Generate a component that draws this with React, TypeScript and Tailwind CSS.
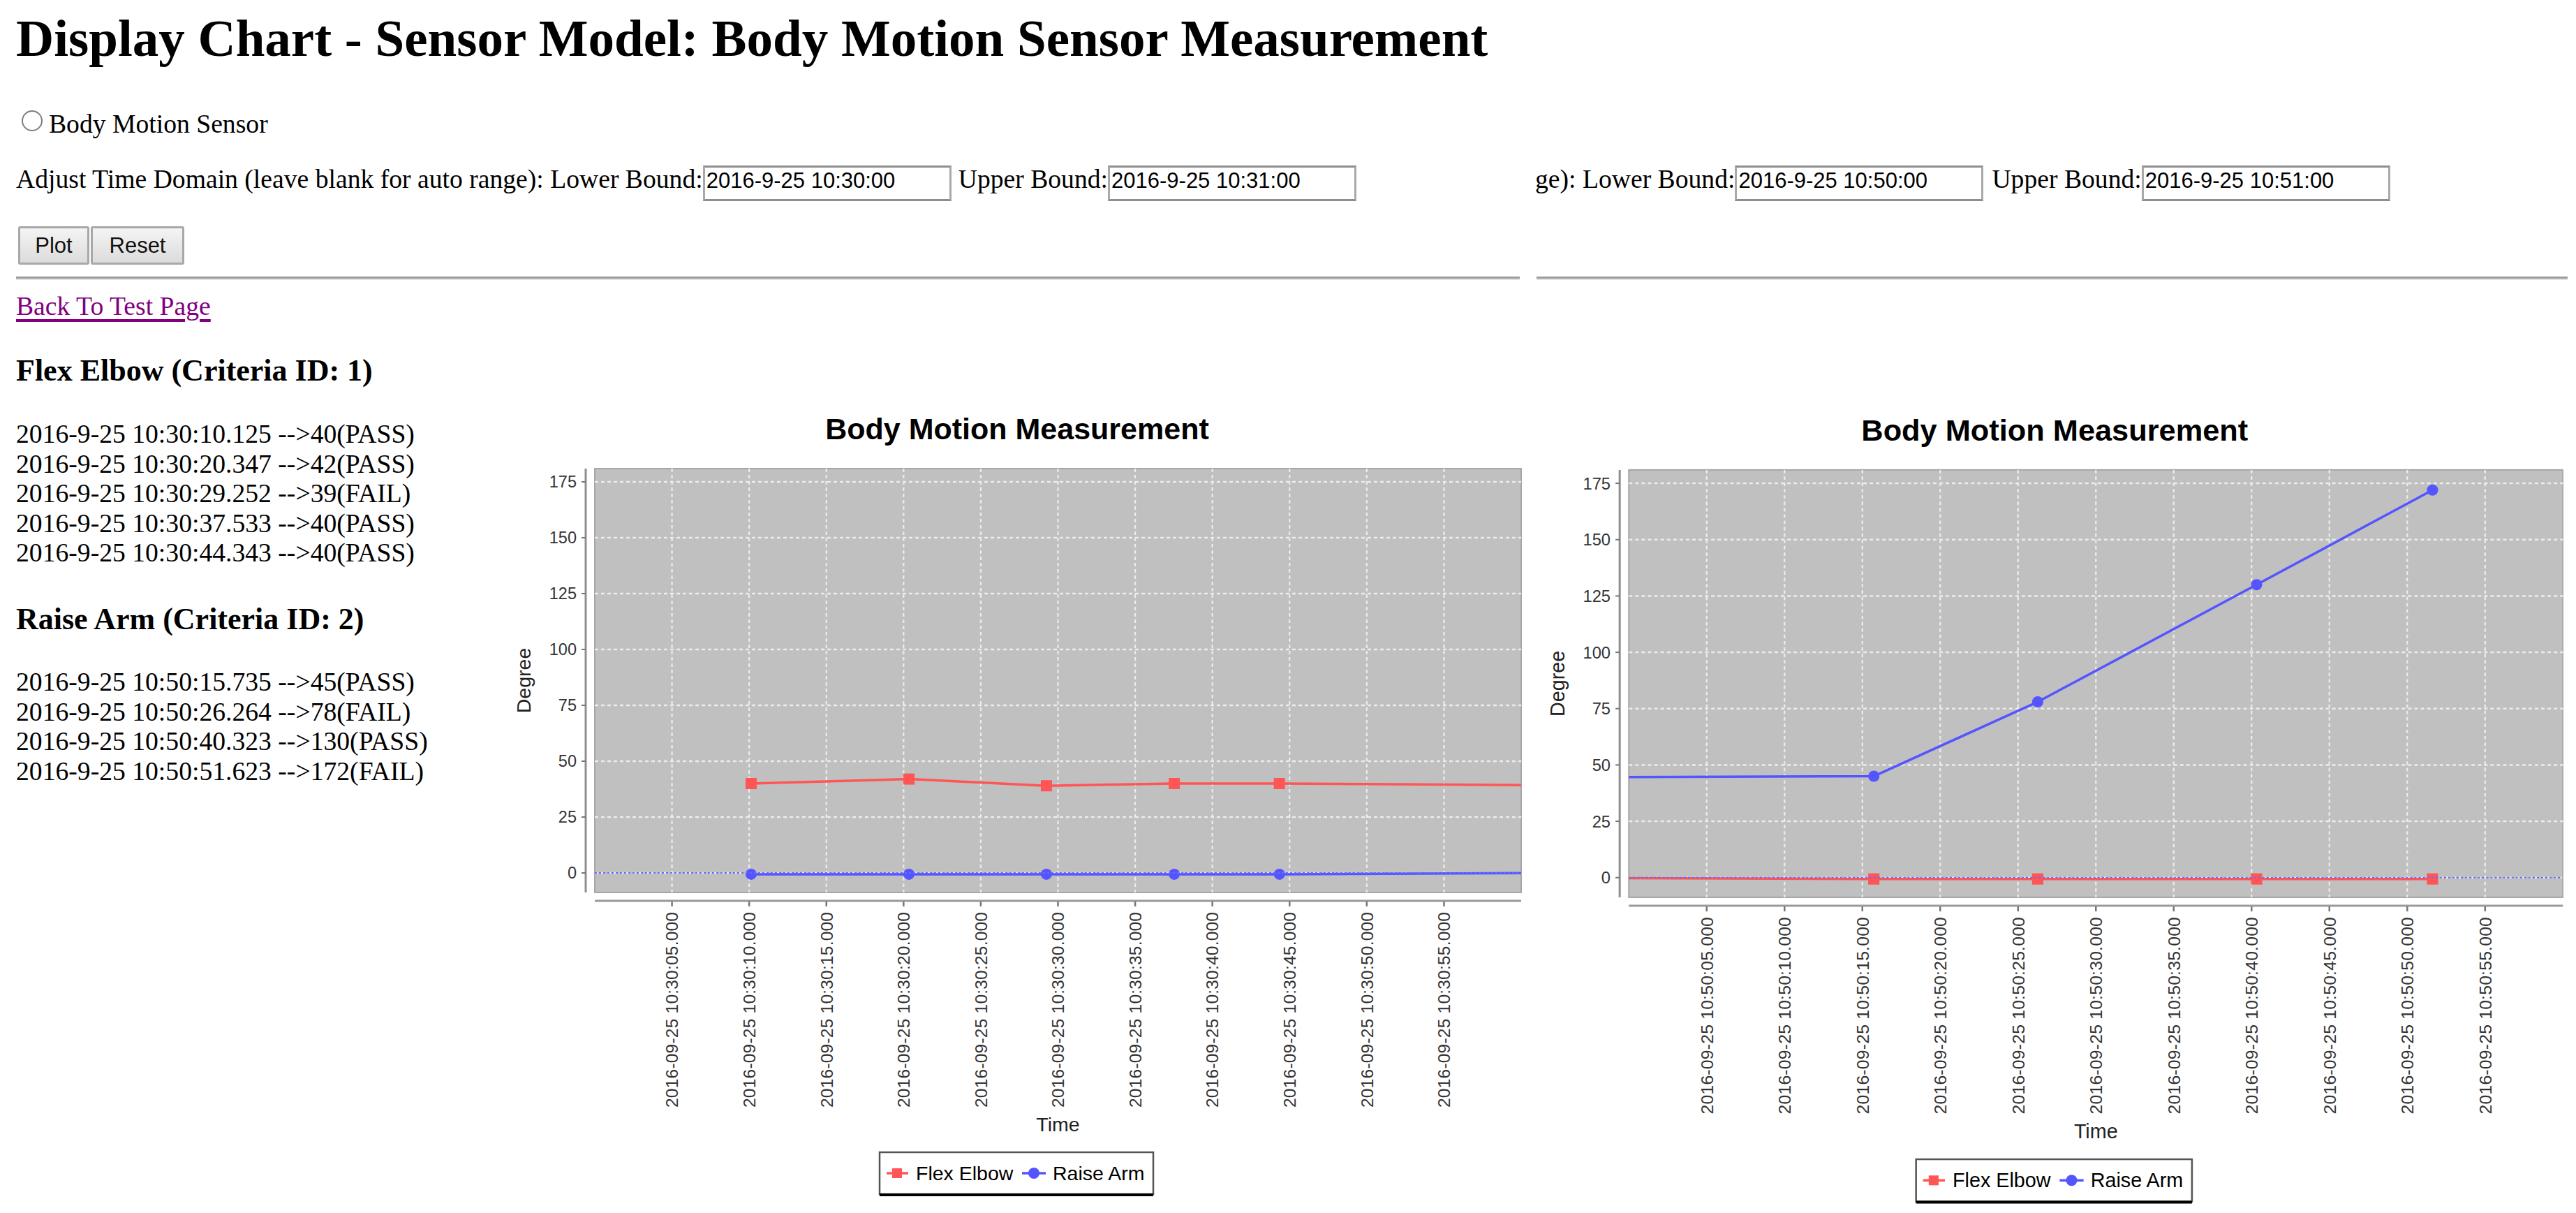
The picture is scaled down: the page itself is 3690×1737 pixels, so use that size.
import React from "react";

type P = [number, number];

const PL = 152;
const PR = 1479;
const PT = 111;
const PB = 718;
const xOf = (t: number) => PL + (t * (PR - PL)) / 60;
const yOf = (v: number) => 690 - v * 3.2;
const RED = "#ff5555";
const BLUE = "#5555ff";
const SANS = "'Liberation Sans', Arial, Helvetica, sans-serif";

interface Series {
  color: string;
  marker: "square" | "circle";
  line: P[];
  points: P[];
}

const TICKS = [5, 10, 15, 20, 25, 30, 35, 40, 45, 50, 55];
const VALS = [0, 25, 50, 75, 100, 125, 150, 175];

function Marker({ kind, x, y, color }: { kind: "square" | "circle"; x: number; y: number; color: string }) {
  if (kind === "square") return <rect x={x - 8} y={y - 8} width={16} height={16} fill={color} />;
  return <circle cx={x} cy={y} r={8} fill={color} />;
}

function Chart({ k, minute, series, id }: { k: number; minute: string; series: Series[]; id: string }) {
  const W = 1480;
  const H = 1180;
  return (
    <svg width={W * k} height={H * k} viewBox={`0 0 ${W} ${H}`} className="block">
      <defs>
        <clipPath id={id}>
          <rect x={PL} y={PT} width={PR - PL} height={PB - PT} />
        </clipPath>
      </defs>
      <text x={757} y={69} textAnchor="middle" fontFamily={SANS} fontWeight="bold" fontSize={43} fill="#000">
        Body Motion Measurement
      </text>
      <rect x={PL} y={PT} width={PR - PL} height={PB - PT} fill="#c0c0c0" stroke="#a6a6a6" strokeWidth={2} />
      {VALS.map((v) => (
        <line key={"h" + v} x1={PL} x2={PR} y1={yOf(v)} y2={yOf(v)} stroke="#ececec" strokeWidth={2.5} strokeDasharray="5 4" />
      ))}
      {TICKS.map((t) => (
        <line key={"v" + t} x1={xOf(t)} x2={xOf(t)} y1={PT} y2={PB} stroke="#ececec" strokeWidth={2.2} strokeDasharray="5 4" />
      ))}
      <g clipPath={`url(#${id})`}>
        {series.map((s, i) => (
          <g key={i}>
            <polyline
              points={s.line.map(([t, v]) => `${xOf(t)},${yOf(v)}`).join(" ")}
              fill="none"
              stroke={s.color}
              strokeWidth={3.5}
              strokeLinejoin="round"
            />
            {s.points.map(([t, v], j) => (
              <Marker key={j} kind={s.marker} x={xOf(t)} y={yOf(v)} color={s.color} />
            ))}
          </g>
        ))}
        <line x1={PL} x2={PR} y1={yOf(0)} y2={yOf(0)} stroke="#6a6aff" strokeWidth={2} strokeDasharray="3 3" />
      </g>
      {/* y axis */}
      <line x1={139} x2={139} y1={PT} y2={PB} stroke="#8f8f8f" strokeWidth={3} />
      {VALS.map((v) => (
        <g key={"yt" + v}>
          <line x1={133} x2={139} y1={yOf(v)} y2={yOf(v)} stroke="#777" strokeWidth={2} />
          <text x={126} y={yOf(v)} dy="0.36em" textAnchor="end" fontFamily={SANS} fontSize={23.5} fill="#333">
            {v}
          </text>
        </g>
      ))}
      <text
        transform="translate(50,414.5) rotate(-90)"
        dy="0.36em"
        textAnchor="middle"
        fontFamily={SANS}
        fontSize={28.5}
        fill="#222"
      >
        Degree
      </text>
      {/* x axis */}
      <line x1={PL} x2={PR} y1={730} y2={730} stroke="#9a9a9a" strokeWidth={3} />
      {TICKS.map((t) => (
        <g key={"xt" + t}>
          <line x1={xOf(t)} x2={xOf(t)} y1={731} y2={738} stroke="#777" strokeWidth={2.5} />
          <text
            transform={`translate(${xOf(t)},746) rotate(-90)`}
            dy="0.36em"
            textAnchor="end"
            fontFamily={SANS}
            fontSize={24.5}
            textLength={280}
            lengthAdjust="spacing"
            fill="#333"
          >
            {`2016-09-25 10:${minute}:${String(t).padStart(2, "0")}.000`}
          </text>
        </g>
      ))}
      <text x={(PL + PR) / 2} y={1060} textAnchor="middle" fontFamily={SANS} fontSize={28.5} fill="#222">
        Time
      </text>
      {/* legend */}
      <rect x={560} y={1090} width={392} height={60} fill="#fff" stroke="#555" strokeWidth={2.5} />
      <line x1={560} x2={952} y1={1151} y2={1151} stroke="#000" strokeWidth={4} />
      <line x1={570} x2={601} y1={1120} y2={1120} stroke={RED} strokeWidth={3.5} />
      <rect x={578} y={1113} width={14} height={14} fill={RED} />
      <text x={612} y={1130} fontFamily={SANS} fontSize={28.5} fill="#000">
        Flex Elbow
      </text>
      <line x1={764} x2={798} y1={1120} y2={1120} stroke={BLUE} strokeWidth={3.5} />
      <circle cx={781} cy={1120} r={8} fill={BLUE} />
      <text x={808} y={1130} fontFamily={SANS} fontSize={28.5} fill="#000">
        Raise Arm
      </text>
    </svg>
  );
}

function Field({ value }: { value: string }) {
  return (
    <input
      readOnly
      value={value}
      className="box-border h-[51px] w-[356px] border-[3px] border-solid border-[#a9a9a9] border-t-[#8e8e8e] border-b-[#8e8e8e] bg-white pl-[2px] pr-[2px] pt-[2px] pb-[8px] font-['Liberation_Sans',Arial,sans-serif] text-[31px] leading-[35.6px] text-black outline-none"
    />
  );
}

const leftT = [10.125, 20.347, 29.252, 37.533, 44.343];
const leftSeries: Series[] = [
  {
    color: RED,
    marker: "square",
    line: [[10.125, 40], [20.347, 42], [29.252, 39], [37.533, 40], [44.343, 40], [62, 39.2]],
    points: [[10.125, 40], [20.347, 42], [29.252, 39], [37.533, 40], [44.343, 40]],
  },
  {
    color: BLUE,
    marker: "circle",
    line: [...leftT.map((t) => [t, -0.6] as P), [62, 0]],
    points: leftT.map((t) => [t, -0.6] as P),
  },
];

const rightT = [15.735, 26.264, 40.323, 51.623];
const rightSeries: Series[] = [
  {
    color: BLUE,
    marker: "circle",
    line: [[-1, 44.6], [15.735, 45], [26.264, 78], [40.323, 130], [51.623, 172]],
    points: [[15.735, 45], [26.264, 78], [40.323, 130], [51.623, 172]],
  },
  {
    color: RED,
    marker: "square",
    line: [[-1, -0.2], ...rightT.map((t) => [t, -0.6] as P)],
    points: rightT.map((t) => [t, -0.6] as P),
  },
];

const flex = [
  "2016-9-25 10:30:10.125 -->40(PASS)",
  "2016-9-25 10:30:20.347 -->42(PASS)",
  "2016-9-25 10:30:29.252 -->39(FAIL)",
  "2016-9-25 10:30:37.533 -->40(PASS)",
  "2016-9-25 10:30:44.343 -->40(PASS)",
];
const raise = [
  "2016-9-25 10:50:15.735 -->45(PASS)",
  "2016-9-25 10:50:26.264 -->78(FAIL)",
  "2016-9-25 10:50:40.323 -->130(PASS)",
  "2016-9-25 10:50:51.623 -->172(FAIL)",
];

export default function App() {
  return (
    <div className="flex h-[1737px] w-[3690px] overflow-hidden bg-white font-['Liberation_Serif','Times_New_Roman',serif] text-[37.65px] leading-[43px] text-black">
      {/* left page */}
      <div className="w-[2180px] shrink-0 overflow-hidden pl-[23px]">
        <h1 className="mt-[12px] whitespace-nowrap text-[75px] leading-[86px] font-bold">
          Display Chart - Sensor Model: Body Motion Sensor Measurement
        </h1>
        <div className="mt-[58px] h-[43px] whitespace-nowrap">
          <input
            type="radio"
            readOnly
            className="ml-[8px] mr-[9px] inline-block h-[30px] w-[30px] appearance-none rounded-full border-[2.5px] border-solid border-[#7d7d7d] bg-white align-[2px]"
          />
          Body Motion Sensor
        </div>
        <div className="mt-[36px] flex h-[52px] items-baseline whitespace-nowrap">
          <span>Adjust Time Domain (leave blank for auto range): Lower Bound:</span>
          <Field value="2016-9-25 10:30:00" />
          <span className="ml-[10px]">Upper Bound:</span>
          <Field value="2016-9-25 10:31:00" />
        </div>
        <div className="ml-[3px] mt-[37px] flex gap-[2px]">
          <button className="box-border h-[55px] w-[102px] rounded-[3px] border-[3px] border-solid border-[#a8a8a8] bg-linear-to-b from-[#f4f4f4] to-[#dcdcdc] font-['Liberation_Sans',Arial,sans-serif] text-[31px] leading-none text-[#111]">
            Plot
          </button>
          <button className="box-border h-[55px] w-[134px] rounded-[3px] border-[3px] border-solid border-[#a8a8a8] bg-linear-to-b from-[#f4f4f4] to-[#dcdcdc] font-['Liberation_Sans',Arial,sans-serif] text-[31px] leading-none text-[#111]">
            Reset
          </button>
        </div>
        <hr className="mr-[3px] mt-[17px] h-[5px] border-0 border-t-[3px] border-b-[2px] border-solid border-t-[#9c9c9c] border-b-[#e2e2e2]" />
        <div className="mt-[16px] h-[43px]">
          <a href="#" className="text-[#800080] underline decoration-[4px] underline-offset-[6px]">
            Back To Test Page
          </a>
        </div>
        <div className="flex">
          <div className="w-[677px] shrink-0 whitespace-nowrap">
            <h3 className="mt-[45px] text-[44px] leading-[51px] font-bold">Flex Elbow (Criteria ID: 1)</h3>
            <div className="mt-[44px] leading-[42.6px]">
              {flex.map((l) => (
                <div key={l}>{l}</div>
              ))}
            </div>
            <h3 className="mt-[48px] text-[44px] leading-[51px] font-bold">Raise Arm (Criteria ID: 2)</h3>
            <div className="mt-[43px] leading-[42.6px]">
              {raise.map((l) => (
                <div key={l}>{l}</div>
              ))}
            </div>
          </div>
          <div className="mt-[100px] shrink-0">
            <Chart k={1} minute="30" series={leftSeries} id="clipLeft" />
          </div>
        </div>
      </div>
      {/* right page (cropped) */}
      <div className="w-[1510px] shrink-0 overflow-hidden">
        <div className="mt-[235px] flex h-[52px] items-baseline whitespace-nowrap pl-[19px]">
          <span>ge): Lower Bound:</span>
          <Field value="2016-9-25 10:50:00" />
          <span className="ml-[12px]">Upper Bound:</span>
          <Field value="2016-9-25 10:51:00" />
        </div>
        <hr className="ml-[21px] mr-[12px] mt-[109px] h-[5px] border-0 border-t-[3px] border-b-[2px] border-solid border-t-[#9c9c9c] border-b-[#e2e2e2]" />
        <div className="mt-[160px]">
          <Chart k={1.0083} minute="50" series={rightSeries} id="clipRight" />
        </div>
      </div>
    </div>
  );
}
